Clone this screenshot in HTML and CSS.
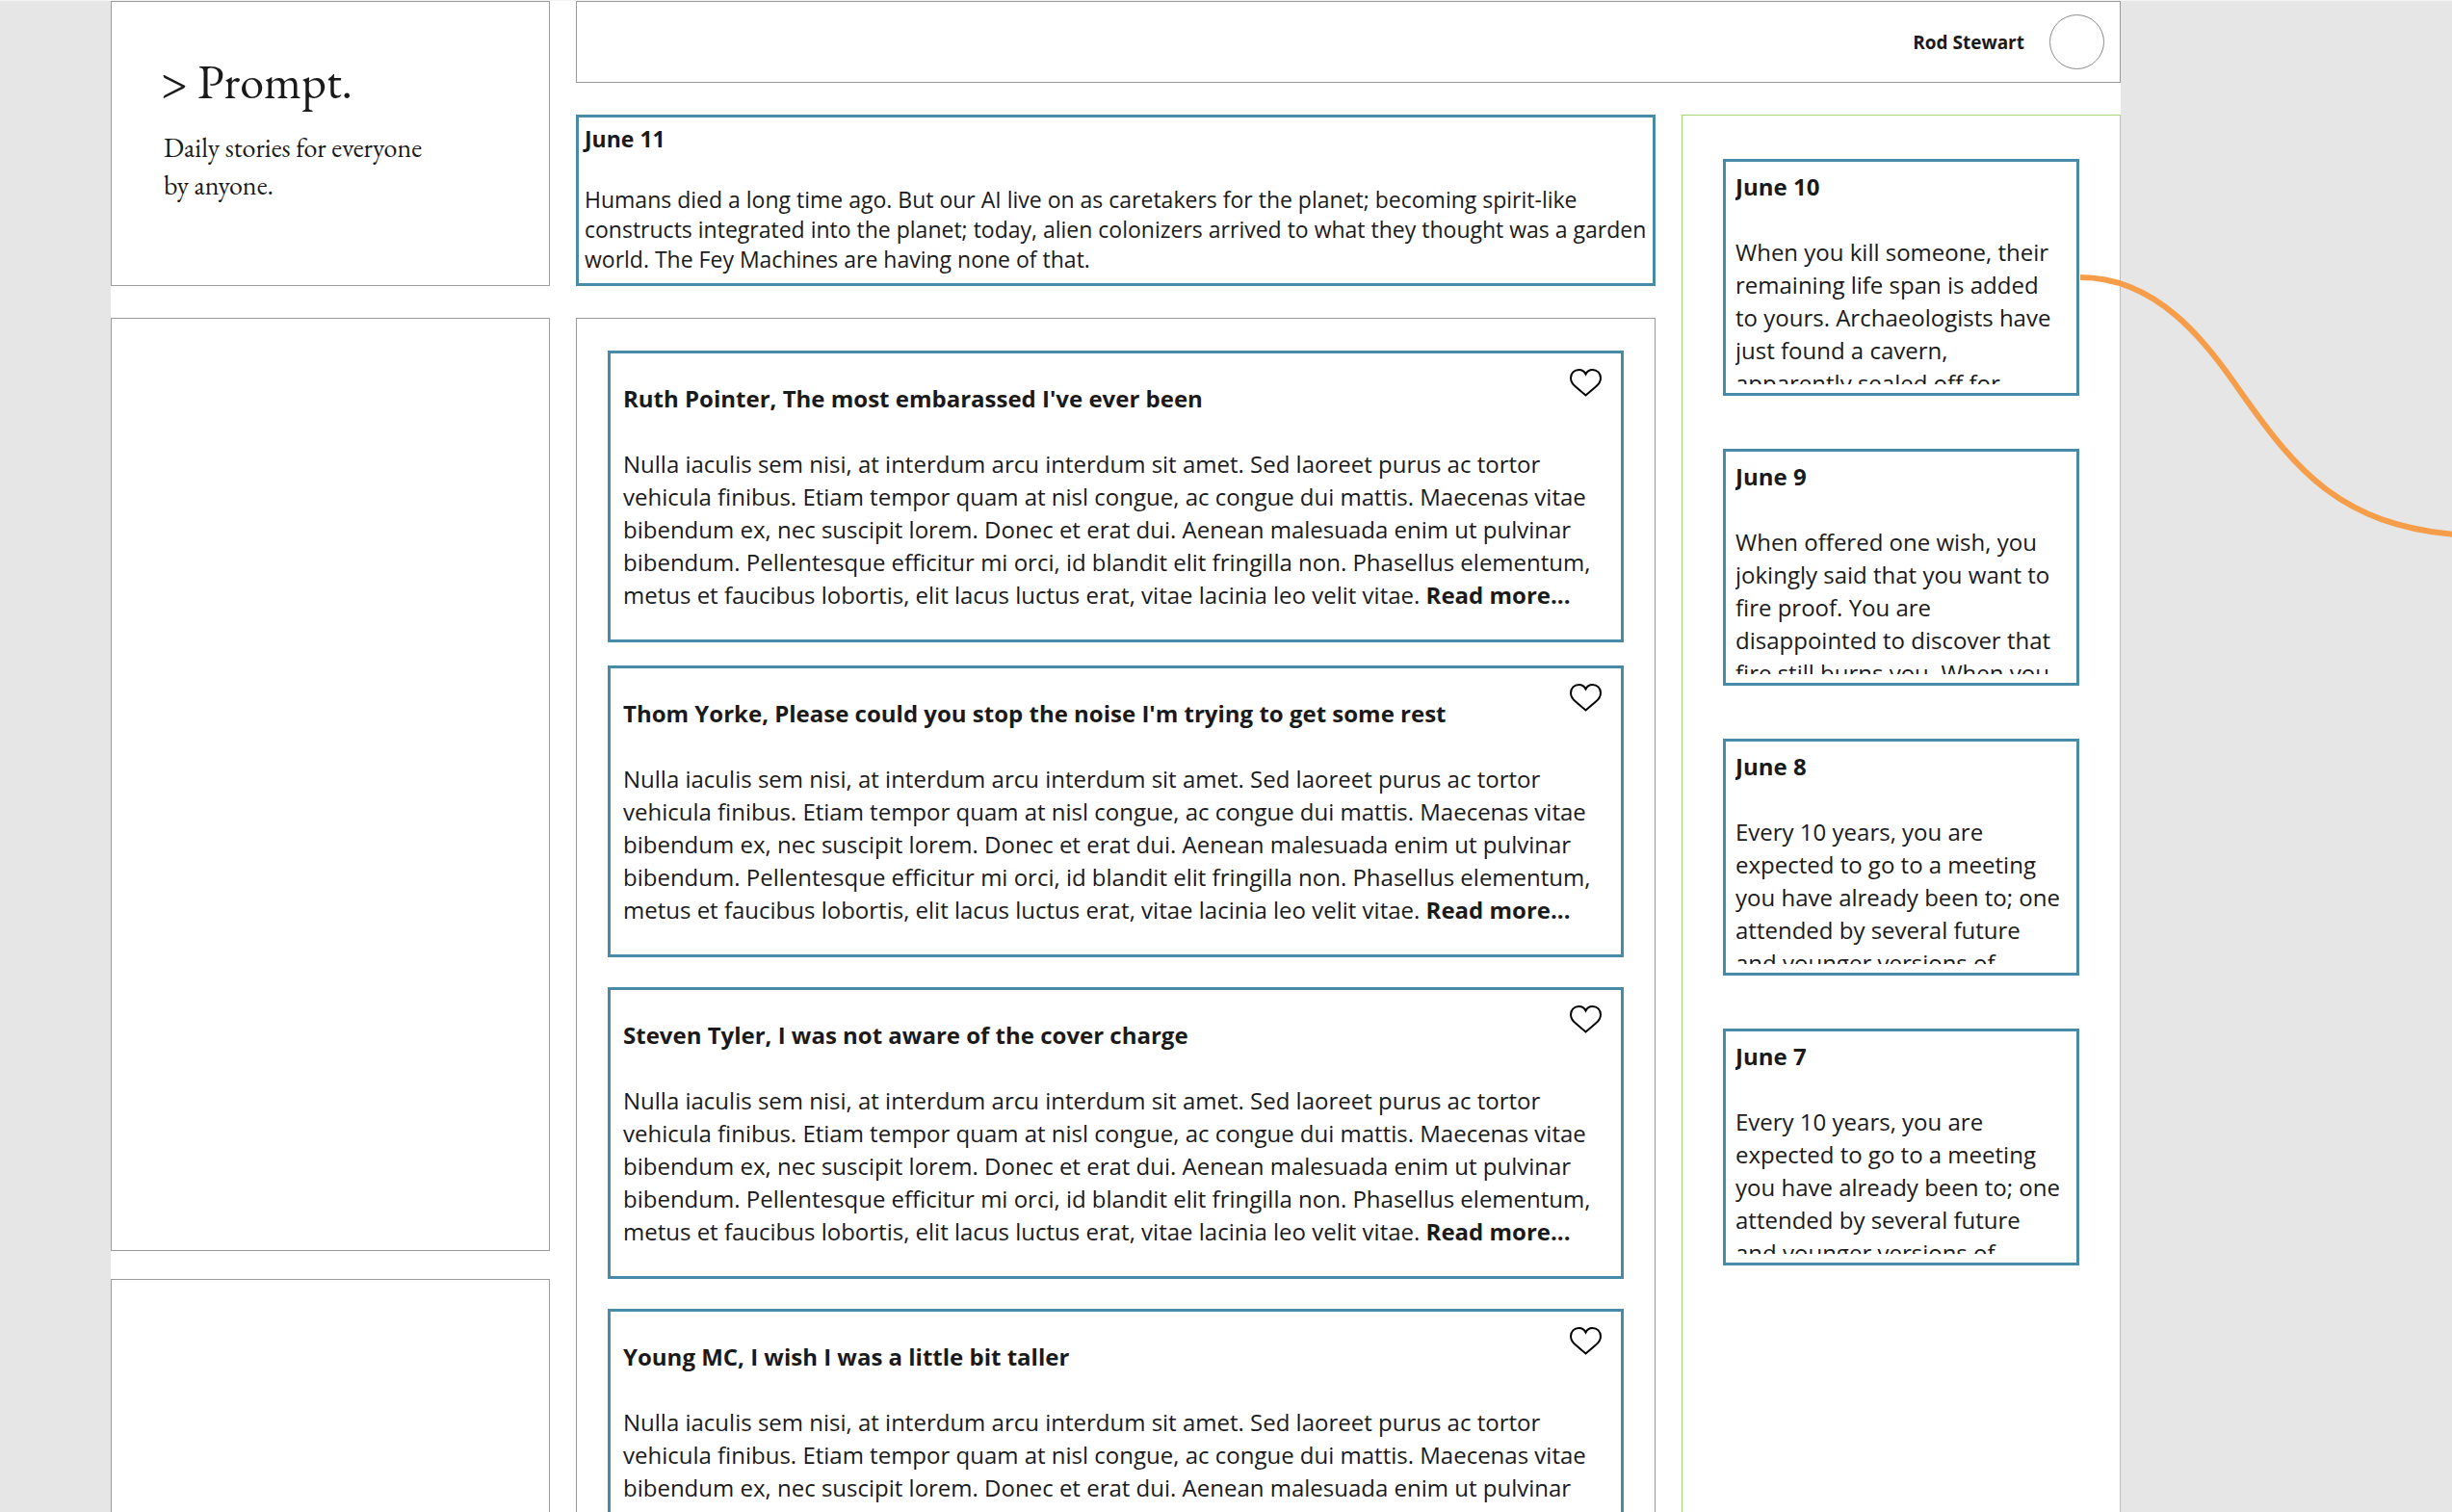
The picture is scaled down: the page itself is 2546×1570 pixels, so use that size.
FILE: index.html
```html
<!DOCTYPE html>
<html lang="en">
<head>
<meta charset="utf-8">
<title>Prompt.</title>
<link rel="stylesheet" href="styles.css">
</head>
<body>
<svg class="symbols" width="0" height="0" aria-hidden="true">
  <symbol id="heart" viewBox="0 0 33 29">
    <path d="M16.500 5.500 C15 2.500 12 1 9.500 1 C4.500 1 1 4.500 1 9.500 C1 13.500 3 16 6 18.600 L16.500 27.500 L27 18.600 C30 16 32 13.500 32 9.500 C32 4.500 28.500 1 23.500 1 C21 1 18 2.500 16.500 5.500 Z" fill="none" stroke="#000" stroke-width="2"/>
  </symbol>
</svg>
<div class="board">
  <div class="rail">
    <header class="panel brand">
      <h1 class="brand-name">&gt; Prompt.</h1>
      <p class="brand-tagline">Daily stories for everyone<br>by anyone.</p>
    </header>
    <section class="panel rail-main"></section>
    <section class="panel rail-extra"></section>
  </div>
  <div class="content">
    <div class="panel topbar">
      <span class="user-name">Rod Stewart</span>
      <span class="avatar"></span>
    </div>
    <div class="columns">
      <main class="main">
        <section class="today">
          <h2 class="today-date">June 11</h2>
          <p class="today-text">Humans died a long time ago. But our AI live on as caretakers for the planet; becoming spirit-like constructs integrated into the planet; today, alien colonizers arrived to what they thought was a garden world. The Fey Machines are having none of that.</p>
        </section>
        <section class="panel feed">
          <article class="card story">
            <button class="like" type="button" aria-label="Like"><svg class="heart"><use href="#heart"/></svg></button>
            <h3 class="title">Ruth Pointer, The most embarassed I've ever been</h3>
            <p class="text">Nulla iaculis sem nisi, at interdum arcu interdum sit amet. Sed laoreet purus ac tortor vehicula finibus. Etiam tempor quam at nisl congue, ac congue dui mattis. Maecenas vitae bibendum ex, nec suscipit lorem. Donec et erat dui. Aenean malesuada enim ut pulvinar bibendum. Pellentesque efficitur mi orci, id blandit elit fringilla non. Phasellus elementum, metus et faucibus lobortis, elit lacus luctus erat, vitae lacinia leo velit vitae. <a class="more" href="#">Read more...</a></p>
          </article>
          <article class="card story story-close">
            <button class="like" type="button" aria-label="Like"><svg class="heart"><use href="#heart"/></svg></button>
            <h3 class="title">Thom Yorke, Please could you stop the noise I'm trying to get some rest</h3>
            <p class="text">Nulla iaculis sem nisi, at interdum arcu interdum sit amet. Sed laoreet purus ac tortor vehicula finibus. Etiam tempor quam at nisl congue, ac congue dui mattis. Maecenas vitae bibendum ex, nec suscipit lorem. Donec et erat dui. Aenean malesuada enim ut pulvinar bibendum. Pellentesque efficitur mi orci, id blandit elit fringilla non. Phasellus elementum, metus et faucibus lobortis, elit lacus luctus erat, vitae lacinia leo velit vitae. <a class="more" href="#">Read more...</a></p>
          </article>
          <article class="card story">
            <button class="like" type="button" aria-label="Like"><svg class="heart"><use href="#heart"/></svg></button>
            <h3 class="title">Steven Tyler, I was not aware of the cover charge</h3>
            <p class="text">Nulla iaculis sem nisi, at interdum arcu interdum sit amet. Sed laoreet purus ac tortor vehicula finibus. Etiam tempor quam at nisl congue, ac congue dui mattis. Maecenas vitae bibendum ex, nec suscipit lorem. Donec et erat dui. Aenean malesuada enim ut pulvinar bibendum. Pellentesque efficitur mi orci, id blandit elit fringilla non. Phasellus elementum, metus et faucibus lobortis, elit lacus luctus erat, vitae lacinia leo velit vitae. <a class="more" href="#">Read more...</a></p>
          </article>
          <article class="card story">
            <button class="like" type="button" aria-label="Like"><svg class="heart"><use href="#heart"/></svg></button>
            <h3 class="title">Young MC, I wish I was a little bit taller</h3>
            <p class="text">Nulla iaculis sem nisi, at interdum arcu interdum sit amet. Sed laoreet purus ac tortor vehicula finibus. Etiam tempor quam at nisl congue, ac congue dui mattis. Maecenas vitae bibendum ex, nec suscipit lorem. Donec et erat dui. Aenean malesuada enim ut pulvinar bibendum. Pellentesque efficitur mi orci, id blandit elit fringilla non. Phasellus elementum, metus et faucibus lobortis, elit lacus luctus erat, vitae lacinia leo velit vitae. <a class="more" href="#">Read more...</a></p>
          </article>
        </section>
      </main>
      <aside class="archive">
        <article class="card day">
          <div class="day-clip">
            <h3 class="title">June 10</h3>
            <p class="text">When you kill someone, their remaining life span is added to yours. Archaeologists have just found a cavern, apparently sealed off for</p>
          </div>
        </article>
        <article class="card day">
          <div class="day-clip">
            <h3 class="title">June 9</h3>
            <p class="text">When offered one wish, you jokingly said that you want to fire proof. You are disappointed to discover that fire still burns you. When you</p>
          </div>
        </article>
        <article class="card day">
          <div class="day-clip">
            <h3 class="title">June 8</h3>
            <p class="text">Every 10 years, you are expected to go to a meeting you have already been to; one attended by several future and younger versions of</p>
          </div>
        </article>
        <article class="card day">
          <div class="day-clip">
            <h3 class="title">June 7</h3>
            <p class="text">Every 10 years, you are expected to go to a meeting you have already been to; one attended by several future and younger versions of</p>
          </div>
        </article>
      </aside>
    </div>
  </div>
  <svg class="connector" viewBox="0 0 390 280" aria-hidden="true">
    <path d="M0 4 C80 4 130 70 168 125 C224 204 270 261 390 271" fill="none" stroke="#f69d4a" stroke-width="6"/>
  </svg>
</div>
</body>
</html>
```
FILE: styles.css
```css
* {
  box-sizing: border-box;
}

body {
  height: 100vh;
  margin: 0;
  overflow: hidden;
  border-top: 1px solid #f4f4f4;
  background: #e6e6e6;
  color: #1a1a1a;
  font-family: "Open Sans", "Noto Sans", sans-serif;
  font-size: 24px;
  line-height: 34px;
}

h1,
h2,
h3,
p {
  margin: 0;
}

.symbols {
  position: absolute;
}

/* White artboard on the grey canvas */
.board {
  position: relative;
  display: grid;
  grid-template-columns: 456fr 1604fr;
  gap: 27px;
  margin: 0 344px 0 115px;
  background: #fff;
}

.panel {
  border: 1px solid #9c9c9c;
  background: #fff;
}

.rail {
  display: flex;
  flex-direction: column;
}

.brand {
  height: 296px;
  padding: 49px 51px 0;
  font-family: "EB Garamond", "Liberation Serif", serif;
}

.brand-name {
  font-size: 50px;
  font-weight: 400;
  line-height: 68px;
}

.brand-tagline {
  padding: 15px 3px 0;
  font-size: 28px;
  line-height: 39px;
}

.rail-main {
  flex: 0 0 969px;
  margin-top: 33px;
}

.rail-extra {
  flex: 1;
  margin-top: 29px;
}

.topbar {
  display: flex;
  align-items: center;
  justify-content: flex-end;
  gap: 26px;
  height: 85px;
  padding: 0 16px;
}

.user-name {
  font-size: 19px;
  font-weight: 700;
}

.avatar {
  width: 57px;
  height: 57px;
  border: 1px solid #8c8c8c;
  border-radius: 50%;
}

.columns {
  display: grid;
  grid-template-columns: 1121fr 456fr;
  gap: 27px;
  margin-top: 33px;
}

.today,
.card {
  border: 3px solid #478ba8;
  background: #fff;
}

.today {
  padding: 7px 6px;
  font-size: 23px;
  line-height: 31px;
}

.today-date {
  font-size: 23px;
}

.today-text {
  padding: 32px 0 2px;
}

.feed {
  margin-top: 33px;
  padding: 33px 32px;
}

.title {
  font-size: 24px;
}

.text {
  margin-top: 34px;
}

.story {
  position: relative;
  padding: 30px 13px 29px;
}

.story + .story {
  margin-top: 31px;
}

.story + .story-close {
  margin-top: 24px;
}

.more {
  color: inherit;
  font-weight: 700;
  text-decoration: none;
}

.like {
  position: absolute;
  top: 16px;
  right: 20px;
  padding: 0;
  border: 0;
  background: none;
}

.heart {
  display: block;
  width: 33px;
  height: 29px;
}

.archive {
  display: flex;
  flex-direction: column;
  gap: 55px;
  padding: 45px 42px;
  border: 1px solid #a4d878;
}

.day {
  padding: 9px 16px 9px 10px;
}

.day-clip {
  height: 222px;
  overflow: hidden;
}

/* Flow arrow leaving the first archive card */
.connector {
  position: absolute;
  top: 283px;
  left: calc(100% - 42px);
  width: 390px;
  height: 280px;
}
```
